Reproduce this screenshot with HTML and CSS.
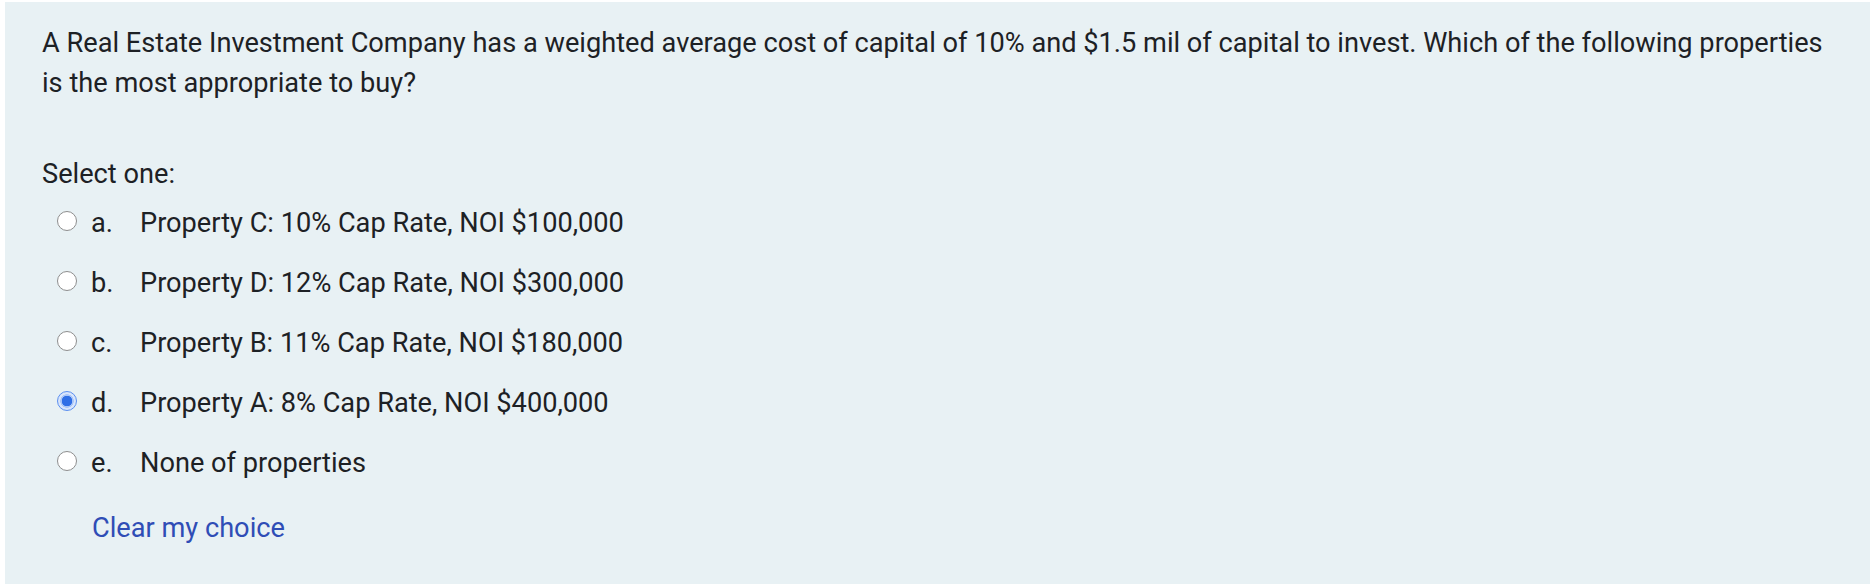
FILE: index.html
```html
<!DOCTYPE html>
<html>
<head>
<meta charset="utf-8">
<link rel="stylesheet" href="styles.css">
</head>
<body>
<div class="formulation">
  <div class="qtext">A Real Estate Investment Company has a weighted average cost of capital of 10% and $1.5 mil of capital to invest. Which of the following properties is the most appropriate to buy?</div>
  <div class="prompt">Select one:</div>
  <div class="answers">
    <div class="opt"><span class="radio"></span><span class="num">a.</span><span class="label">Property C: 10% Cap Rate, NOI $100,000</span></div>
    <div class="opt"><span class="radio"></span><span class="num">b.</span><span class="label">Property D: 12% Cap Rate, NOI $300,000</span></div>
    <div class="opt"><span class="radio"></span><span class="num">c.</span><span class="label">Property B: 11% Cap Rate, NOI $180,000</span></div>
    <div class="opt"><span class="radio checked"></span><span class="num">d.</span><span class="label">Property A: 8% Cap Rate, NOI $400,000</span></div>
    <div class="opt"><span class="radio"></span><span class="num">e.</span><span class="label">None of properties</span></div>
  </div>
  <a class="clear" href="#">Clear my choice</a>
</div>
</body>
</html>
```
FILE: styles.css
```css
html, body {
  margin: 0;
  padding: 0;
  background: #ffffff;
}
body {
  padding: 2px 4px 4px 5px;
  font-family: Roboto, "Liberation Sans", sans-serif;
  font-size: 27.2px;
  line-height: 40px;
  color: #1d2125;
}
.formulation {
  background: #e8f1f4;
  padding: 21px 37px 36px 37px;
  display: flex;
  flex-direction: column;
  align-items: flex-start;
}
.qtext {
  margin: 0;
}
.prompt {
  margin-top: 51px;
}
.answers {
  display: flex;
  flex-direction: column;
}
.opt {
  display: flex;
  align-items: center;
  padding: 9px 0 11px 0;
}
.radio {
  box-sizing: border-box;
  width: 20px;
  height: 20px;
  border-radius: 50%;
  border: 1.5px solid #8e8e8e;
  background: #ffffff;
  margin: 0 14px 4px 15px;
  flex: none;
}
.radio.checked {
  border: 1.5px solid #5b8ff0;
  background: radial-gradient(circle, #2f6ee6 0 5px, #a9c5f7 5.5px 6.5px, #d8e5fb 7px);
}
.num {
  width: 49px;
  flex: none;
}
.clear {
  margin-top: 14px;
  margin-left: 50px;
  color: #2f4db6;
  text-decoration: none;
}
```
